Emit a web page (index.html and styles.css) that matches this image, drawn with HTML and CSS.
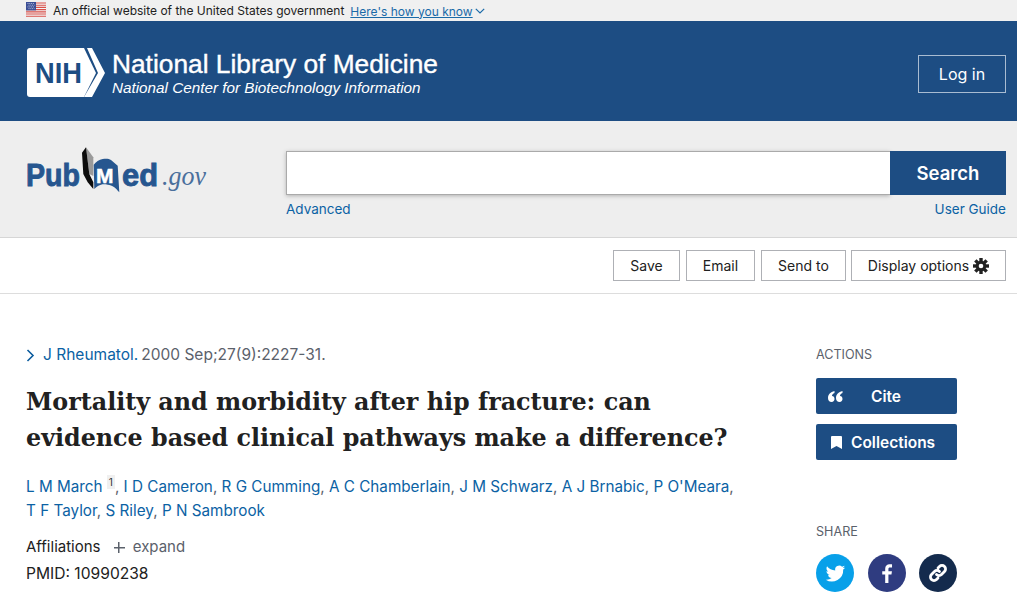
FILE: index.html
```html
<!DOCTYPE html>
<html lang="en">
<head>
    <meta charset="UTF-8">
    <meta name="viewport" content="width=device-width, initial-scale=1.0">
    <title>Mortality and morbidity after hip fracture - PubMed</title>
    <link rel="stylesheet" href="styles.css">
</head>
<body>
    <div class="gov-banner">
        <svg class="flag" viewBox="0 0 20 15" width="20" height="15">
            <rect width="20" height="15" fill="#f4f4f4"/>
            <path d="M0 1h20M0 3.2h20M0 5.4h20M0 7.6h20M0 9.8h20M0 12h20M0 14.2h20" stroke="#d8504a" stroke-width="1.15"/>
            <rect width="10" height="8.4" fill="#3c4f96"/>
            <path d="M1.5 1.5h7M2.5 3.2h6M1.5 4.9h7M2.5 6.6h6" stroke="#c9cfe6" stroke-width=".8" stroke-dasharray="1 .8"/>
        </svg>
        <span class="gov-text">An official website of the United States government</span>
        <a class="gov-link" href="#">Here's how you know</a>
        <svg class="gov-chevron" viewBox="0 0 10 6" width="10" height="6"><path d="M.8.8 5 5 9.2.8" fill="none" stroke="#1a6aa8" stroke-width="1.2"/></svg>
    </div>

    <header class="nih-header">
        <div class="nih-brand">
            <svg class="nih-logo" viewBox="0 0 78 50" width="78" height="50">
                <path d="M3 0h54l12 25-12 24H3a3 3 0 0 1-3-3V3a3 3 0 0 1 3-3z" fill="#fff"/>
                <path d="M60 0h5l13 25-13 24h-8l14-24z" fill="#fff"/>
                <text x="8" y="35" class="nih-letters" textLength="47" lengthAdjust="spacingAndGlyphs">NIH</text>
            </svg>
            <div class="nih-names">
                <div class="nih-title">National Library of Medicine</div>
                <div class="nih-subtitle">National Center for Biotechnology Information</div>
            </div>
        </div>
        <a class="login" href="#">Log in</a>
    </header>

    <section class="search-band">
        <svg class="pubmed-logo" viewBox="0 0 182 52" width="182" height="52">
            <text x="0" y="40" class="pm-word" textLength="54" lengthAdjust="spacingAndGlyphs">Pub</text>
            <path d="M60 1.300 67.300 11.300V30L63.300 28z" fill="#9a9a9a"/>
            <path d="M56 6.700 60 1.300 63.300 28 67.300 36.300V43L61.700 36.300 57.300 28z" fill="#0c0c0c"/>
            <path d="M67.700 18.700C70 16 73 13.500 76.700 13 80 12.300 83 12.600 85 14L91.700 19.700 93.300 46.300C91 44 90 42.500 88.300 41.300 86 39.800 84 38.900 81.700 38.700 79 38.300 77 38.200 75 38.700 72 39.500 70 41 68.300 43z" fill="#26568f"/>
            <text x="70" y="36.500" class="pm-m">M</text>
            <text x="96" y="40" class="pm-word" textLength="36" lengthAdjust="spacingAndGlyphs">ed</text>
            <text x="136" y="39" class="pm-gov" textLength="44" lengthAdjust="spacingAndGlyphs">.gov</text>
        </svg>
        <div class="search-col">
            <div class="search-row">
                <input class="search-input" type="text" aria-label="Search">
                <button class="search-button">Search</button>
            </div>
            <div class="search-links">
                <a href="#">Advanced</a>
                <a href="#">User Guide</a>
            </div>
        </div>
    </section>

    <nav class="toolbar">
        <button class="tool-button save-button">Save</button>
        <button class="tool-button email-button">Email</button>
        <button class="tool-button send-button">Send to</button>
        <button class="tool-button display-options">Display options
            <svg class="gear" viewBox="0 0 16 16" width="16" height="16">
                <g fill="#222">
                    <rect x="6.300" y="0" width="3.400" height="16"/>
                    <rect x="6.300" y="0" width="3.400" height="16" transform="rotate(45 8 8)"/>
                    <rect x="6.300" y="0" width="3.400" height="16" transform="rotate(90 8 8)"/>
                    <rect x="6.300" y="0" width="3.400" height="16" transform="rotate(135 8 8)"/>
                    <circle cx="8" cy="8" r="5.200"/>
                </g>
                <circle cx="8" cy="8" r="2.300" fill="#fff"/>
            </svg>
        </button>
    </nav>

    <main class="article">
        <div class="article-main">
            <div class="citation">
                <svg class="cite-chevron" viewBox="0 0 9 13" width="9" height="13"><path d="M1.500 1 7 6.500 1.500 12" fill="none" stroke="#0b5c9e" stroke-width="1.600"/></svg>
                <a href="#">J Rheumatol.</a> <span>2000 Sep;27(9):2227-31.</span>
            </div>
            <h1>Mortality and morbidity after hip fracture: can<br>evidence based clinical pathways make a difference?</h1>
            <div class="authors">
                <a href="#">L M March</a> <sup class="aff-ref">1</sup>, <a href="#">I D Cameron</a>, <a href="#">R G Cumming</a>, <a href="#">A C Chamberlain</a>, <a href="#">J M Schwarz</a>, <a href="#">A J Brnabic</a>, <a href="#">P O'Meara</a>,<br>
                <a href="#">T F Taylor</a>, <a href="#">S Riley</a>, <a href="#">P N Sambrook</a>
            </div>
            <div class="affiliations">Affiliations <span class="expand"><span class="plus"></span>expand</span></div>
            <div class="pmid">PMID: 10990238</div>
        </div>

        <aside class="sidebar">
            <h3>ACTIONS</h3>
            <button class="action-button">
                <svg class="quote" viewBox="0 0 15 11" width="15" height="11"><path d="M6.500 0v2C5 2.500 4 3.500 4 5c1.500 0 2.500 1 2.500 3 0 1.500-1 3-3 3S0 9.500 0 7c0-3.500 2.500-6 6.500-7zm8 0v2C13 2.500 12 3.500 12 5c1.500 0 2.500 1 2.500 3 0 1.500-1 3-3 3S8 9.500 8 7c0-3.500 2.500-6 6.500-7z" fill="#fff"/></svg>
                <span class="cite-label">Cite</span>
            </button>
            <button class="action-button collections">
                <svg viewBox="0 0 11 13" width="11" height="13"><path d="M1 0h9a1 1 0 0 1 1 1v12l-5.500-3L0 13V1a1 1 0 0 1 1-1z" fill="#fff"/></svg>
                <span>Collections</span>
            </button>
            <h3 class="share-title">SHARE</h3>
            <div class="share-row">
                <a class="share twitter" href="#"><svg viewBox="0 0 24 24" width="21" height="21"><path d="M23 5c-.8.400-1.700.6-2.600.7 1-.6 1.700-1.400 2-2.500-.9.500-1.900.9-2.900 1.100a4.600 4.600 0 0 0-7.800 4.200C7.900 8.300 4.500 6.500 2.300 3.700c-1.200 2.100-.6 4.700 1.400 6.100-.7 0-1.400-.2-2-.6 0 2.200 1.500 4.100 3.700 4.600-.7.200-1.400.2-2.100.1.600 1.800 2.300 3.100 4.300 3.200A9.300 9.300 0 0 1 .8 19a13 13 0 0 0 20-11.600c.9-.6 1.600-1.400 2.200-2.400z" fill="#fff"/></svg></a>
                <a class="share facebook" href="#"><svg viewBox="0 0 12 20" width="12" height="19"><path d="M7.500 20v-9h3.200l.5-3.500H7.500V5.300c0-1 .3-1.700 1.800-1.700h2V.4C11 .3 9.900.2 8.700.2 6 .2 4.100 1.900 4.100 4.900v2.600H1V11h3.100v9z" fill="#fff"/></svg></a>
                <a class="share link" href="#"><svg viewBox="0 0 20 20" width="20" height="20"><path d="M8.500 11.500a3.500 3.500 0 0 0 5 0l3-3a3.500 3.500 0 0 0-5-5l-1.500 1.500M11.500 8.500a3.500 3.500 0 0 0-5 0l-3 3a3.500 3.500 0 0 0 5 5l1.500-1.500" fill="none" stroke="#fff" stroke-width="2.800" stroke-linecap="round"/></svg></a>
            </div>
        </aside>
    </main>
</body>
</html>
```

FILE: styles.css
```css
* {
    box-sizing: border-box;
}

html, body {
    height: 612px;
    overflow: hidden;
}

body {
    margin: 0;
    font-family: Inter, "Liberation Sans", sans-serif;
    color: #212121;
    background-color: #fff;
}

a {
    color: #0b62a4;
    text-decoration: none;
}

button {
    font-family: inherit;
    cursor: pointer;
}

/* top banner */
.gov-banner {
    height: 21px;
    display: flex;
    align-items: center;
    padding-left: 26px;
    background-color: #f0f0f0;
    font-size: 12px;
}

.flag {
    margin-right: 7px;
    margin-top: -3px;
}

.gov-text {
    margin-right: 6px;
}

.gov-link {
    color: #1a6aa8;
    text-decoration: underline;
    margin-top: 1px;
}

.gov-chevron {
    margin-left: 2px;
    margin-top: 1px;
}

/* NIH header */
.nih-header {
    height: 100px;
    display: flex;
    align-items: center;
    justify-content: space-between;
    padding: 0 11px 0 27px;
    background-color: #1d4d83;
    color: #fff;
}

.nih-brand {
    display: flex;
    align-items: center;
    gap: 7px;
    margin-top: 4px;
}

.nih-letters {
    font-family: "Liberation Sans", sans-serif;
    font-weight: bold;
    font-size: 30px;
    fill: #1d4d83;
}

.nih-title {
    font-family: "Liberation Sans", sans-serif;
    font-size: 26.3px;
    line-height: 29px;
    -webkit-text-stroke: 0.4px #fff;
}

.nih-subtitle {
    font-family: "Liberation Sans", sans-serif;
    font-style: italic;
    font-size: 15.250px;
    line-height: 17px;
}

.login {
    width: 88px;
    height: 38px;
    margin-top: 6px;
    border: 1px solid #a9bcd2;
    color: #fff;
    font-size: 16px;
    display: flex;
    align-items: center;
    justify-content: center;
}

/* search */
.search-band {
    height: 117px;
    display: flex;
    align-items: flex-start;
    padding: 30px 11px 0 26px;
    background-color: #eee;
    border-bottom: 1px solid #d6d6d6;
}

.pubmed-logo {
    margin-top: -5px;
    margin-right: 78px;
    flex-shrink: 0;
}

.pm-word {
    font-family: "Liberation Sans", sans-serif;
    font-weight: bold;
    font-size: 32px;
    fill: #26568f;
    stroke: #26568f;
    stroke-width: 0.9px;
}

.pm-m {
    font-family: "Liberation Sans", sans-serif;
    font-weight: bold;
    font-size: 21px;
    fill: #fff;
    stroke: #fff;
    stroke-width: 0.5px;
}

.pm-gov {
    font-family: "Liberation Serif", serif;
    font-style: italic;
    font-size: 27px;
    fill: #4a6f9c;
}

.search-col {
    flex: 1;
}

.search-row {
    display: flex;
    height: 44px;
}

.search-input {
    flex: 1;
    border: 1px solid #aaa;
    border-right: 0;
    background-color: #fff;
    box-shadow: 0 1px 4px rgba(0, 0, 0, 0.25);
}

.search-button {
    width: 116px;
    border: none;
    background-color: #1d4d83;
    color: #fff;
    font-size: 18.500px;
    font-weight: 600;
}

.search-links {
    display: flex;
    justify-content: space-between;
    margin-top: 6px;
    font-size: 13.500px;
    line-height: 17px;
}

/* toolbar */
.toolbar {
    height: 56px;
    display: flex;
    justify-content: flex-end;
    align-items: center;
    gap: 6px;
    padding: 0 11px 0 0;
    border-bottom: 1px solid #ddd;
}

.tool-button {
    height: 31px;
    padding: 0;
    border: 1px solid #aeb0b5;
    background-color: #fff;
    color: #212121;
    font-size: 14px;
    display: flex;
    align-items: center;
    justify-content: center;
    gap: 4px;
}

.save-button {
    width: 67px;
}

.email-button {
    width: 69px;
}

.send-button {
    width: 85px;
}

.display-options {
    width: 155px;
    margin-left: -1px;
}

/* article */
.article {
    display: flex;
    padding: 51px 60px 0 26px;
    justify-content: space-between;
}

.article-main {
    width: 760px;
}

.citation {
    display: flex;
    align-items: center;
    gap: 3px;
    font-size: 15.500px;
    line-height: 20px;
    color: #5b616b;
}

.cite-chevron {
    margin-right: 5px;
}

h1 {
    margin: 19px 0 0;
    font-family: "DejaVu Serif", serif;
    font-weight: bold;
    font-size: 23.800px;
    line-height: 36px;
    color: #212121;
    white-space: nowrap;
}

.authors {
    margin-top: 19px;
    font-size: 15.250px;
    line-height: 24px;
    color: #5b616b;
    white-space: nowrap;
}

.aff-ref {
    font-size: 10px;
    line-height: 0;
    background-color: #f0f0f0;
    padding: 1px 2px;
    color: #333;
}

.affiliations {
    margin-top: 12px;
    font-size: 15px;
    line-height: 24px;
}

.expand {
    margin-left: 9px;
    color: #5b616b;
}

.plus {
    display: inline-block;
    width: 11px;
    height: 11px;
    margin-right: 8px;
    vertical-align: -1px;
    background: linear-gradient(#5b616b, #5b616b) center / 11px 1.500px no-repeat,
                linear-gradient(#5b616b, #5b616b) center / 1.500px 11px no-repeat;
}

.pmid {
    margin-top: 3px;
    font-size: 15.600px;
    line-height: 24px;
}

.sidebar {
    width: 141px;
}

.sidebar h3 {
    margin: 0;
    font-size: 12.600px;
    font-weight: 400;
    line-height: 20px;
    color: #5b616b;
}

.action-button {
    width: 100%;
    height: 36px;
    margin-top: 13px;
    border: none;
    border-radius: 2px;
    background-color: #1d4d83;
    color: #fff;
    font-size: 15.500px;
    font-weight: 600;
    display: flex;
    align-items: center;
    padding: 0 0 0 12px;
}

.cite-label {
    margin-left: 28px;
}

.collections {
    margin-top: 10px;
    padding-left: 15px;
    gap: 9px;
}

.sidebar .share-title {
    margin-top: 62px;
}

.share-row {
    display: flex;
    justify-content: space-between;
    margin-top: 12px;
}

.share {
    width: 38px;
    height: 38px;
    border-radius: 50%;
    display: flex;
    align-items: center;
    justify-content: center;
}

.twitter {
    background-color: #08a0e9;
}

.facebook {
    background-color: #2f3c80;
}

.link {
    background-color: #142b4d;
}
```
